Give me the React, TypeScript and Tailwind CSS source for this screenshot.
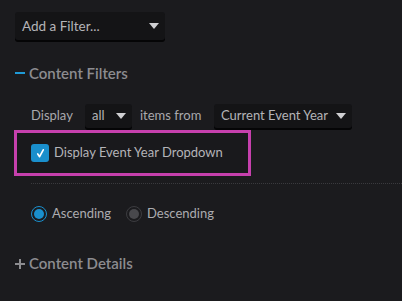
function Caret() {
  return (
    <span className="inline-block h-0 w-0 shrink-0 border-x-[5px] border-t-[6px] border-x-transparent border-t-[#cfcfd2]" />
  );
}

function Select({ label, width }: { label: string; width: string }) {
  return (
    <div
      className={`flex h-[24px] items-center justify-between whitespace-nowrap rounded-[3px] bg-[#141416] pl-[7px] pr-[6px] text-[13px] text-[#b4b4b8] shadow-[0_2px_0_#050506] ${width}`}
    >
      <span>{label}</span>
      <Caret />
    </div>
  );
}

export default function App() {
  return (
    <div className="min-h-[301px] w-[402px] bg-[#1b1b1e] pt-[12px] font-['Lato','Noto_Sans',sans-serif]">
      <div className="ml-[15px] flex h-[28px] w-[150px] items-center justify-between rounded-[3px] bg-[#141416] pl-[7px] pr-[6px] text-[13.5px] text-[#b4b4b8] shadow-[0_2px_0_#050506]">
        <span>Add a Filter...</span>
        <Caret />
      </div>

      <div className="mt-[21px] flex h-[24px] items-center pl-[15px] text-[15px] font-semibold text-[#8c8c90]">
        <span className="mr-[4px] inline-block h-[2px] w-[10px] bg-[#1f9ad6]" />
        Content Filters
      </div>

      <div className="mt-[19px] flex items-center whitespace-nowrap pl-[31px] text-[13px] text-[#a9a9ad]">
        <span className="w-[42px]">Display</span>
        <div className="ml-[12px]">
          <Select label="all" width="w-[47px]" />
        </div>
        <span className="ml-[8px] w-[61px]">items from</span>
        <div className="ml-[13px]">
          <Select label="Current Event Year" width="w-[138px]" />
        </div>
      </div>

      <div className="ml-[14px] mt-[2px] flex h-[46px] w-[237px] items-center border-[3px] border-[#c640ad] bg-[#19191c] pl-[14px]">
        <span className="flex h-[18px] w-[18px] items-center justify-center rounded-[3px] bg-[#1a8fcc]">
          <svg viewBox="0 0 12 12" className="h-[11px] w-[11px]">
            <path d="M3 6.5 L5 9.5 L9 2" fill="none" stroke="#fff" strokeWidth="1.8" strokeLinecap="round" strokeLinejoin="round" />
          </svg>
        </span>
        <span className="ml-[5px] text-[13px] text-[#b4b4b8]">Display Event Year Dropdown</span>
      </div>

      <div className="ml-[31px] mt-[7px] border-t border-dotted border-[#3a3a3e]" />

      <div className="mt-[20px] flex items-center pl-[31px] text-[13px] text-[#acacb0]">
        <span className="flex h-[16px] w-[16px] items-center justify-center rounded-full border-[1.5px] border-[#1a8fcc]">
          <span className="h-[10px] w-[10px] rounded-full bg-[#1a8fcc]" />
        </span>
        <span className="ml-[5px] w-[60px]">Ascending</span>
        <span className="ml-[14px] flex h-[16px] w-[16px] items-center justify-center rounded-full border-[1.5px] border-[#3c3c40]">
          <span className="h-[10px] w-[10px] rounded-full bg-[#48484c]" />
        </span>
        <span className="ml-[5px]">Descending</span>
      </div>

      <div className="mt-[28px] flex h-[24px] items-center pl-[15px] text-[15px] font-semibold text-[#8c8c90]">
        <svg viewBox="0 0 10 10" className="mr-[4px] h-[10px] w-[10px]">
          <path d="M5 0 V10 M0 5 H10" stroke="#8c8c90" strokeWidth="2" />
        </svg>
        Content Details
      </div>
    </div>
  );
}
